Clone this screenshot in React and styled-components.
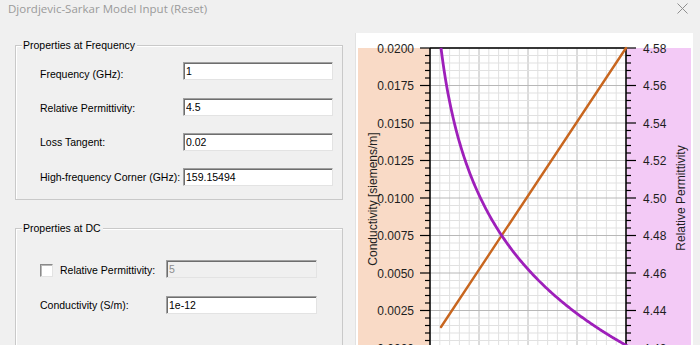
import React from 'react';
import styled, { createGlobalStyle } from 'styled-components';

const GlobalStyle = createGlobalStyle`
  html, body {
    margin: 0;
    padding: 0;
    background: #f0f0f0;
  }
`;

const Window = styled.div`
  width: 700px;
  height: 345px;
  overflow: hidden;
  background: #f0f0f0;
  font-family: 'Liberation Sans', Arial, sans-serif;
  font-size: 10.5px;
  color: #000;
`;

const TitleBar = styled.div`
  height: 33px;
  display: flex;
  align-items: flex-start;
  justify-content: space-between;
  padding: 0 12px 0 8px;
  box-sizing: border-box;
`;

const Title = styled.div`
  font-family: 'Open Sans', sans-serif;
  font-size: 11.5px;
  line-height: 18px;
  color: #9a9a9a;
`;

const CloseIcon = styled.svg`
  margin-top: 3px;
`;

const Body = styled.div`
  display: flex;
  align-items: flex-start;
  padding-left: 15px;
`;

const LeftColumn = styled.div`
  width: 328px;
  display: flex;
  flex-direction: column;
`;

const GroupBox = styled.div`
  position: relative;
  margin-top: ${(p) => p.$top}px;
  border: 1px solid #c9c9c9;
  box-shadow: inset 1px 1px 0 #fff;
  padding: ${(p) => p.$pad};
  display: grid;
  grid-template-columns: ${(p) => p.$cols};
  row-gap: ${(p) => p.$gap}px;
  align-items: center;
`;

const Legend = styled.span`
  position: absolute;
  top: -7px;
  left: 6px;
  padding: 0 2px 0 1px;
  background: #f0f0f0;
  line-height: 13px;
`;

const Label = styled.div`
  line-height: 13px;
  white-space: nowrap;
  padding-top: ${(p) => p.$drop || 0}px;
  display: flex;
  align-items: center;
`;

const Field = styled.input`
  box-sizing: border-box;
  width: ${(p) => p.$w}px;
  height: 18px;
  margin: 0;
  padding: 0 0 0 2px;
  font-family: 'Liberation Sans', Arial, sans-serif;
  font-size: 10.5px;
  color: ${(p) => (p.disabled ? '#8d8d8d' : '#000')};
  background: ${(p) => (p.disabled ? '#f0f0f0' : '#fff')};
  border: 1px solid;
  border-color: #a0a0a0 #e3e3e3 #e3e3e3 #a0a0a0;
  box-shadow: inset 1px 1px 0 #6e6e6e;
  outline: none;
`;

const CheckBox = styled.span`
  width: 13px;
  height: 13px;
  box-sizing: border-box;
  margin-right: 7px;
  background: #fff;
  border: 1px solid;
  border-color: #8a8a8a #e3e3e3 #e3e3e3 #8a8a8a;
  box-shadow: inset 1px 1px 0 #b9b9b9;
`;

const ChartPanel = styled.div`
  margin-left: 12px;
  width: 338px;
  height: 320px;
  background: #fff;
  border-left: 1px solid #e2e2e2;
  box-sizing: border-box;
  overflow: hidden;
`;

const PX0 = 74;
const PX1 = 270;
const PY0 = 15;
const MAJ_Y = 37.5;
const MIN_Y = 7.5;
const MIN_X = (PX1 - PX0) / 20;

const leftLabels = ['0.0200', '0.0175', '0.0150', '0.0125', '0.0100', '0.0075', '0.0050', '0.0025', '0.0000'];
const rightLabels = ['4.58', '4.56', '4.54', '4.52', '4.50', '4.48', '4.46', '4.44', '4.42'];

function permittivityPath() {
  const pts = [];
  for (let x = 85; x <= 272; x += 1) {
    const y = -280.6 + 112 * Math.log(x - 71);
    pts.push(`${x},${y.toFixed(2)}`);
  }
  return 'M' + pts.join(' L');
}

const Chart = () => {
  const vLines = [];
  for (let i = 0; i <= 20; i++) {
    const x = PX0 + i * MIN_X;
    vLines.push(
      <line key={'v' + i} x1={x} x2={x} y1={PY0} y2={330}
        stroke={i % 5 === 0 ? '#b8b8b8' : '#e1e1e1'} strokeWidth="1" />
    );
  }
  const hLines = [];
  const ticks = [];
  for (let i = 0; i <= 42; i++) {
    const y = PY0 + i * MIN_Y;
    const major = i % 5 === 0;
    hLines.push(
      <line key={'h' + i} x1={PX0} x2={PX1} y1={y} y2={y}
        stroke={major ? '#b8b8b8' : '#e1e1e1'} strokeWidth="1" />
    );
    ticks.push(
      <line key={'tl' + i} x1={major ? PX0 - 10 : PX0 - 5} x2={PX0} y1={y} y2={y} stroke="#000" strokeWidth="1.2" />,
      <line key={'tr' + i} x1={PX1} x2={major ? PX1 + 10 : PX1 + 5} y1={y} y2={y} stroke="#000" strokeWidth="1.2" />
    );
  }

  return (
    <svg width="338" height="320" viewBox="0 0 338 320">
      <rect x="2" y={PY0} width={PX0 - 2} height="310" fill="#f9dac6" />
      <rect x={PX1} y={PY0} width="65" height="310" fill="#f3caf6" />
      <rect x={PX0} y={PY0} width={PX1 - PX0} height="310" fill="#fff" />
      {vLines}
      {hLines}
      {ticks}
      <line x1={PX0} x2={PX1} y1={PY0} y2={PY0} stroke="#000" strokeWidth="1.5" />
      <line x1={PX0} x2={PX0} y1={PY0} y2={330} stroke="#000" strokeWidth="1.5" />
      <line x1={PX1} x2={PX1} y1={PY0} y2={330} stroke="#000" strokeWidth="1.5" />
      {leftLabels.map((t, i) => (
        <text key={t} x="58" y={PY0 + i * MAJ_Y + 4.5} textAnchor="end"
          fontFamily="Liberation Sans, Arial, sans-serif" fontSize="12" fill="#1e1e1e">{t}</text>
      ))}
      {rightLabels.map((t, i) => (
        <text key={t} x="287" y={PY0 + i * MAJ_Y + 4.5}
          fontFamily="Liberation Sans, Arial, sans-serif" fontSize="12" fill="#1e1e1e">{t}</text>
      ))}
      <text transform="translate(21,166) rotate(-90)" textAnchor="middle"
        fontFamily="Liberation Sans, Arial, sans-serif" fontSize="12" fill="#1e1e1e">
        Conductivity [siemens/m]
      </text>
      <text transform="translate(329,165) rotate(-90)" textAnchor="middle"
        fontFamily="Liberation Sans, Arial, sans-serif" fontSize="12" fill="#1e1e1e">
        Relative Permittivity
      </text>
      <line x1="85" y1="294" x2="270" y2="15" stroke="#c8661f" strokeWidth="2.4" strokeLinecap="round" />
      <path d={permittivityPath()} fill="none" stroke="#9e1fba" strokeWidth="2.8" strokeLinejoin="round" />
    </svg>
  );
};

export default function App() {
  return (
    <>
      <GlobalStyle />
      <Window>
        <TitleBar>
          <Title>Djordjevic-Sarkar Model Input (Reset)</Title>
          <CloseIcon width="11" height="11" viewBox="0 0 11 11">
            <path d="M0.5 0.5 L10.5 10.5 M10.5 0.5 L0.5 10.5" stroke="#8f8f8f" strokeWidth="1" fill="none" />
          </CloseIcon>
        </TitleBar>
        <Body>
          <LeftColumn>
            <GroupBox $top={12} $pad="14px 9px 13px 24px" $cols="143px 150px" $gap={17}>
              <Legend>Properties at Frequency</Legend>
              <Label $drop={8}>Frequency (GHz):</Label>
              <Field $w={150} defaultValue="1" />
              <Label $drop={3}>Relative Permittivity:</Label>
              <Field $w={150} defaultValue="4.5" />
              <Label $drop={1}>Loss Tangent:</Label>
              <Field $w={150} defaultValue="0.02" />
              <Label $drop={1}>High-frequency Corner (GHz):</Label>
              <Field $w={150} defaultValue="159.15494" />
            </GroupBox>
            <GroupBox $top={28} $pad="31px 25px 31px 24px" $cols="126px 151px" $gap={18}>
              <Legend>Properties at DC</Legend>
              <Label $drop={2}><CheckBox />Relative Permittivity:</Label>
              <Field $w={151} defaultValue="5" disabled />
              <Label>Conductivity (S/m):</Label>
              <Field $w={151} defaultValue="1e-12" />
            </GroupBox>
          </LeftColumn>
          <ChartPanel>
            <Chart />
          </ChartPanel>
        </Body>
      </Window>
    </>
  );
}
